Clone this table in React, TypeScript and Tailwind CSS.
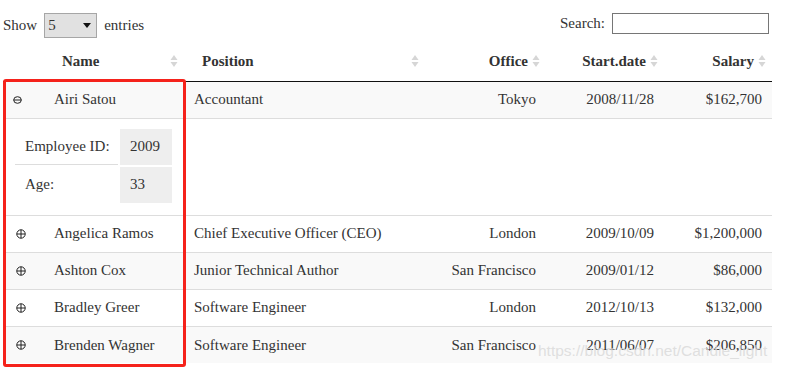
import React from 'react';

interface Employee {
    name: string;
    position: string;
    office: string;
    start: string;
    salary: string;
}

const employees: Employee[] = [
    { name: 'Airi Satou', position: 'Accountant', office: 'Tokyo', start: '2008/11/28', salary: '$162,700' },
    { name: 'Angelica Ramos', position: 'Chief Executive Officer (CEO)', office: 'London', start: '2009/10/09', salary: '$1,200,000' },
    { name: 'Ashton Cox', position: 'Junior Technical Author', office: 'San Francisco', start: '2009/01/12', salary: '$86,000' },
    { name: 'Bradley Greer', position: 'Software Engineer', office: 'London', start: '2012/10/13', salary: '$132,000' },
    { name: 'Brenden Wagner', position: 'Software Engineer', office: 'San Francisco', start: '2011/06/07', salary: '$206,850' },
];

function SortIcon() {
    return (
        <svg width="8" height="14" viewBox="0 0 8 14" className="absolute right-[6px] top-1/2 -translate-y-1/2">
            <path d="M4 1 L7.5 6 L0.5 6 Z" fill="#d6d6d6" />
            <path d="M4 13 L7.5 8 L0.5 8 Z" fill="#d6d6d6" />
        </svg>
    );
}

function PlusIcon() {
    return (
        <svg width="10" height="10" viewBox="0 0 10 10" className="ml-[3px]">
            <circle cx="5" cy="5" r="4.2" fill="none" stroke="#222" strokeWidth="1" />
            <line x1="5" y1="0.8" x2="5" y2="9.2" stroke="#222" strokeWidth="1" />
            <line x1="0.8" y1="5" x2="9.2" y2="5" stroke="#222" strokeWidth="1" />
        </svg>
    );
}

function MinusIcon() {
    return (
        <svg width="9" height="8" viewBox="0 0 9 8">
            <ellipse cx="4.5" cy="4" rx="3.8" ry="3.3" fill="none" stroke="#222" strokeWidth="1" />
            <line x1="0.7" y1="4" x2="8.3" y2="4" stroke="#222" strokeWidth="1" />
        </svg>
    );
}

export default function App() {
    return (
        <div className="relative w-[785px] h-[376px] bg-white text-[#333] text-[15px] overflow-hidden" style={{ fontFamily: '"Liberation Serif", "Times New Roman", serif' }}>
            <div className="ml-[3px] w-[769px]">
                {/* length + search */}
                <div className="flex justify-between items-start pt-[13px] h-[42px]">
                    <div className="flex items-center gap-[7px] h-[25px]">
                        <span>Show</span>
                        <div className="flex items-center justify-between w-[53px] h-[25px] border border-[#a6a6a6] bg-[#e1e1e1] pl-[3px] pr-[5px]">
                            <span>5</span>
                            <svg width="8" height="5" viewBox="0 0 8 5"><path d="M0 0 L8 0 L4 5 Z" fill="#111" /></svg>
                        </div>
                        <span>entries</span>
                    </div>
                    <div className="flex items-center gap-[7px] h-[21px] pr-[3px]">
                        <span>Search:</span>
                        <div className="w-[157px] h-[21px] border border-[#767676] bg-white" />
                    </div>
                </div>

                <table className="w-[769px] table-fixed">
                    <colgroup>
                        <col className="w-[41px]" />
                        <col className="w-[140px]" />
                        <col className="w-[241px]" />
                        <col className="w-[121px]" />
                        <col className="w-[118px]" />
                        <col className="w-[108px]" />
                    </colgroup>
                    <thead>
                        <tr className="h-[39px] border-b border-[#111]">
                            <th />
                            <th className="relative text-left font-bold pl-[18px]">Name<SortIcon /></th>
                            <th className="relative text-left font-bold pl-[18px]">Position<SortIcon /></th>
                            <th className="relative text-right font-bold pr-[18px]">Office<SortIcon /></th>
                            <th className="relative text-right font-bold pr-[18px]">Start.date<SortIcon /></th>
                            <th className="relative text-right font-bold pr-[18px]">Salary<SortIcon /></th>
                        </tr>
                    </thead>
                    <tbody>
                        {employees.map((e, i) => (
                            <React.Fragment key={e.name}>
                                <tr className={`h-[37px] ${i === 0 ? '' : 'border-t border-[#ddd]'} ${i % 2 === 0 ? 'bg-[#f9f9f9]' : 'bg-white'}`}>
                                    <td className="pl-[10px]">{i === 0 ? <MinusIcon /> : <PlusIcon />}</td>
                                    <td className="px-[10px] whitespace-nowrap">{e.name}</td>
                                    <td className="px-[10px] whitespace-nowrap">{e.position}</td>
                                    <td className="px-[10px] text-right whitespace-nowrap">{e.office}</td>
                                    <td className="px-[10px] text-right whitespace-nowrap">{e.start}</td>
                                    <td className="px-[10px] text-right whitespace-nowrap">{e.salary}</td>
                                </tr>
                                {i === 0 && (
                                    <tr className="border-t border-[#ddd] bg-white">
                                        <td colSpan={6} className="px-[10px] pt-[8px] pb-[10px]">
                                            <table className="border-separate border-spacing-[2px]">
                                                <tbody>
                                                    <tr>
                                                        <td className="w-[103px] h-[36px] pl-[10px] pr-[4px] border-b border-[#ddd] whitespace-nowrap">Employee ID:</td>
                                                        <td className="w-[52px] h-[36px] px-[10px] bg-[#eee]">2009</td>
                                                    </tr>
                                                    <tr>
                                                        <td className="h-[36px] px-[10px]">Age:</td>
                                                        <td className="h-[36px] px-[10px] bg-[#eee]">33</td>
                                                    </tr>
                                                </tbody>
                                            </table>
                                        </td>
                                    </tr>
                                )}
                            </React.Fragment>
                        ))}
                    </tbody>
                </table>
            </div>

            {/* annotation box */}
            <div className="absolute left-[3px] top-[79px] w-[183px] h-[288px] border-[3px] border-[#f5221b] rounded-[3px]" />

            {/* watermark */}
            <div className="absolute left-[538px] top-[339px] text-[15.5px] text-[#d8d8d8]/80" style={{ fontFamily: '"Liberation Sans", Arial, sans-serif' }}>
                https://blog.csdn.net/Candle_light
            </div>
        </div>
    );
}
